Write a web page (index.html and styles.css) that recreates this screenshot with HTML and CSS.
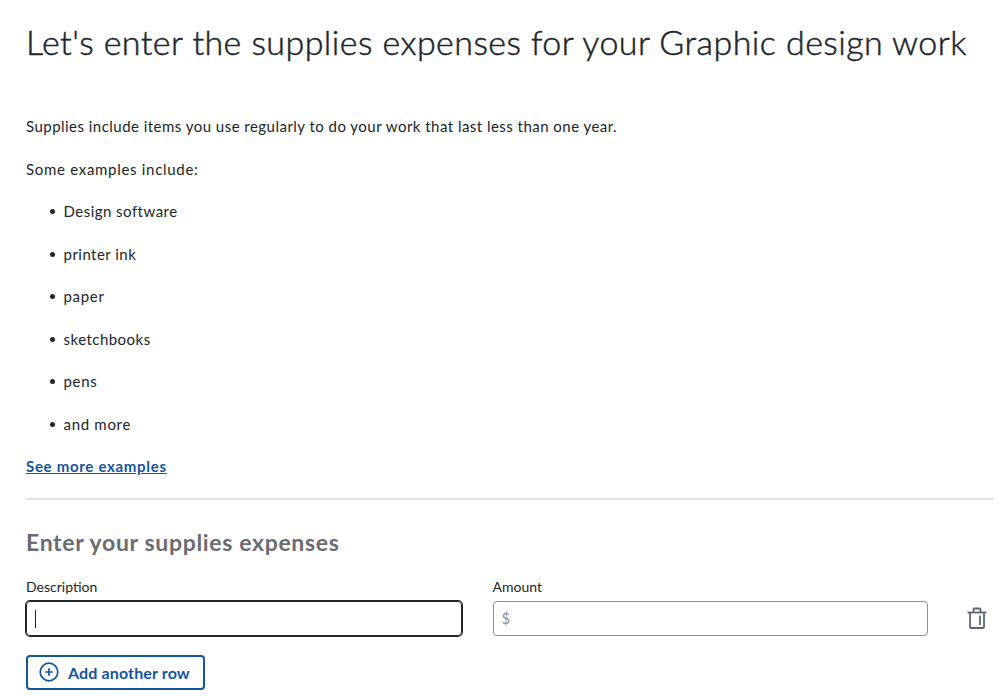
FILE: index.html
```
<!DOCTYPE html>
<html lang="en">
<head>
  <meta charset="UTF-8" />
  <meta name="viewport" content="width=device-width, initial-scale=1.0"/>
  <title>Supplies expenses</title>
  <link rel="stylesheet" href="styles.css">
</head>
<body>

<h1>Let's enter the supplies expenses for your Graphic design work</h1>

<div class="intro">
  <p>Supplies include items you use regularly to do your work that last less than one year.</p>
  <p class="wide">Some examples include:</p>
  <ul>
    <li>Design software</li>
    <li>printer ink</li>
    <li class="wide">paper</li>
    <li>sketchbooks</li>
    <li class="wide">pens</li>
    <li class="wide">and more</li>
  </ul>
  <a href="#" class="more">See more examples</a>
</div>

<h2>Enter your supplies expenses</h2>

<div class="row">
  <div class="field">
    <label for="description">Description</label>
    <div class="box active">
      <span class="caret"></span>
      <input type="text" id="description" />
    </div>
  </div>
  <div class="field">
    <label for="amount">Amount</label>
    <div class="box">
      <input type="text" id="amount" placeholder="$" />
    </div>
  </div>
  <button class="trash" aria-label="Delete row">
    <svg width="20" height="22" viewBox="0 0 20 22" fill="none" stroke="#5b6770" stroke-width="1.8">
      <path d="M0.5 5.5h19" />
      <path d="M6.5 5V2.6c0-.6.4-1.1 1-1.1h5c.6 0 1 .5 1 1.1V5" />
      <path d="M3 6v14c0 .6.4 1 1 1h12c.6 0 1-.4 1-1V6" />
      <path d="M13 8.5v9.5" />
    </svg>
  </button>
</div>

<button class="add">
  <svg width="20" height="20" viewBox="0 0 20 20" fill="none" stroke="#1355a0" stroke-width="1.7">
    <circle cx="10" cy="10" r="8.8" />
    <path d="M10 6.2v7.6M6.2 10h7.6" />
  </svg>
  <span>Add another row</span>
</button>

</body>
</html>
```

FILE: styles.css
```
body {
  font-family: Lato, sans-serif;
  font-size: 15px;
  line-height: 21.3px;
  color: #21262a;
  background: #fff;
  margin: 0;
  padding: 21px 5px 0 26px;
}
h1 {
  margin: 0;
  font-size: 34px;
  font-weight: 300;
  line-height: 42px;
  letter-spacing: 0.44px;
  white-space: nowrap;
  -webkit-text-stroke: 0.5px #21262a;
}
.intro {
  padding: 53px 0 20px;
  border-bottom: 2px solid #e3e5e8;
  letter-spacing: 0.47px;
}
.intro p {
  margin: 0 0 21.25px;
}
.intro .wide {
  letter-spacing: 0.7px;
}
ul {
  margin: 0;
  padding-left: 23px;
  list-style: none;
}
li {
  display: flex;
  align-items: center;
  gap: 8.5px;
  margin-bottom: 21.25px;
}
li::before {
  content: "";
  width: 5px;
  height: 5px;
  margin-left: 1px;
  border-radius: 50%;
  background: #21262a;
}
.more {
  display: inline-block;
  margin-top: -1px;
  font-weight: bold;
  letter-spacing: 0.7px;
  color: #1355a0;
}
h2 {
  margin: 27px 0 21px;
  font-size: 23px;
  line-height: 30px;
  letter-spacing: 0.66px;
  color: #6b6c72;
}
.row {
  display: grid;
  grid-template-columns: 435.5px 435.5px 20px;
  column-gap: 31px;
}
label {
  display: block;
  font-size: 14px;
  line-height: 18px;
  margin-bottom: 5px;
}
.box {
  position: relative;
  box-sizing: border-box;
  height: 35px;
  border: 1px solid #8d9096;
  border-radius: 4px;
}
.box.active {
  border-color: #21262a;
  box-shadow: 0 0 0 1px #21262a;
}
.box input {
  width: 100%;
  height: 100%;
  box-sizing: border-box;
  padding: 0 8px;
  border: none;
  outline: none;
  background: none;
  font: 15px Lato, sans-serif;
}
.box input::placeholder {
  color: #8d9096;
}
.caret {
  position: absolute;
  left: 8px;
  top: 8px;
  width: 1px;
  height: 18px;
  background: #21262a;
}
button {
  padding: 0;
  border: none;
  background: none;
  cursor: pointer;
}
.trash {
  align-self: end;
  height: 35px;
  margin-left: 8px;
  padding-bottom: 1px;
}
.trash svg {
  display: block;
}
.add {
  display: flex;
  align-items: center;
  gap: 9px;
  box-sizing: border-box;
  width: 179px;
  height: 35px;
  margin-top: 19px;
  padding-left: 11px;
  border: 2px solid #1355a0;
  border-radius: 4px;
  color: #1355a0;
  font: bold 16px Lato, sans-serif;
  letter-spacing: 0.13px;
}
```
